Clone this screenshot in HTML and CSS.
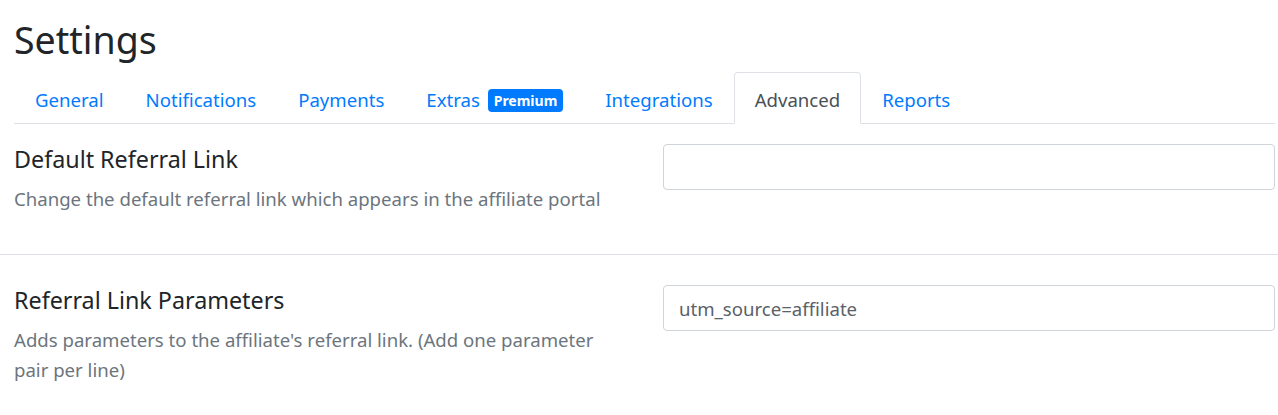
FILE: index.html
```html
<!DOCTYPE html>
<html lang="en">
<head>
<meta charset="utf-8">
<title>Settings</title>
<link rel="stylesheet" href="styles.css">
</head>
<body>
  <div class="container">
    <h1 class="page-title">Settings</h1>
    <ul class="nav-tabs">
      <li><a class="nav-link" href="#">General</a></li>
      <li><a class="nav-link" href="#">Notifications</a></li>
      <li><a class="nav-link" href="#">Payments</a></li>
      <li><a class="nav-link" href="#">Extras <span class="badge">Premium</span></a></li>
      <li><a class="nav-link" href="#">Integrations</a></li>
      <li><a class="nav-link active" href="#">Advanced</a></li>
      <li><a class="nav-link" href="#">Reports</a></li>
    </ul>
  </div>
  <div class="tab-content">
    <div class="setting-row first">
      <div class="setting-info">
        <h4 class="setting-title">Default Referral Link</h4>
        <p class="setting-desc">Change the default referral link which appears in the affiliate portal</p>
      </div>
      <div class="setting-control">
        <input class="form-control" type="text" value="">
      </div>
    </div>
    <div class="setting-row">
      <div class="setting-info">
        <h4 class="setting-title">Referral Link Parameters</h4>
        <p class="setting-desc">Adds parameters to the affiliate's referral link. (Add one parameter pair per line)</p>
      </div>
      <div class="setting-control">
        <input class="form-control" type="text" value="utm_source=affiliate">
      </div>
    </div>
  </div>
</body>
</html>
```
FILE: styles.css
```css
* { box-sizing: border-box; }
html, body { margin: 0; padding: 0; background: #fff; }
body {
  font-family: "Noto Sans", "Open Sans", sans-serif;
  color: #212529;
  font-size: 15px;
  line-height: 1.5;
}
.container {
  padding: 16px 3px 0 14px;
}
.page-title {
  margin: 0 0 8px 0;
  font-size: 37.5px;
  line-height: 48px;
  font-weight: 400;
  color: #212529;
}
.nav-tabs {
  list-style: none;
  margin: 0;
  padding: 0;
  display: flex;
  border-bottom: 1px solid #dee2e6;
}
.nav-tabs li {
  margin-bottom: -1px;
}
.nav-link {
  display: block;
  padding: 12px 20px 8px;
  font-size: 18.6px;
  line-height: 30px;
  color: #007bff;
  text-decoration: none;
  border: 1px solid transparent;
  border-top-left-radius: 4px;
  border-top-right-radius: 4px;
}
.nav-link.active {
  color: #495057;
  background: #fff;
  border-color: #dee2e6 #dee2e6 #fff;
}
.badge {
  display: inline-block;
  margin-left: 3px;
  padding: 4px 6px;
  font-size: 14px;
  line-height: 15px;
  font-weight: 700;
  color: #fff;
  background: #007bff;
  border-radius: 4px;
  vertical-align: 1px;
}
.setting-row {
  display: grid;
  grid-template-columns: 1fr 612px;
  column-gap: 40px;
  padding: 30px 3px 40px 14px;
  border-bottom: 1px solid #dee2e6;
}
.setting-row.first {
  padding-top: 20px;
}
.setting-title {
  margin: 0 0 10px 0;
  font-size: 23.3px;
  line-height: 30px;
  font-weight: 400;
  color: #212529;
}
.setting-desc {
  margin: 0;
  font-size: 18.6px;
  line-height: 30px;
  color: #6c757d;
}
.form-control {
  display: block;
  width: 100%;
  height: 46px;
  padding: 0 15px;
  font-family: inherit;
  font-size: 18.6px;
  color: #5a6168;
  background: #fff;
  border: 1px solid #ced4da;
  border-radius: 4px;
  outline: none;
}
```
